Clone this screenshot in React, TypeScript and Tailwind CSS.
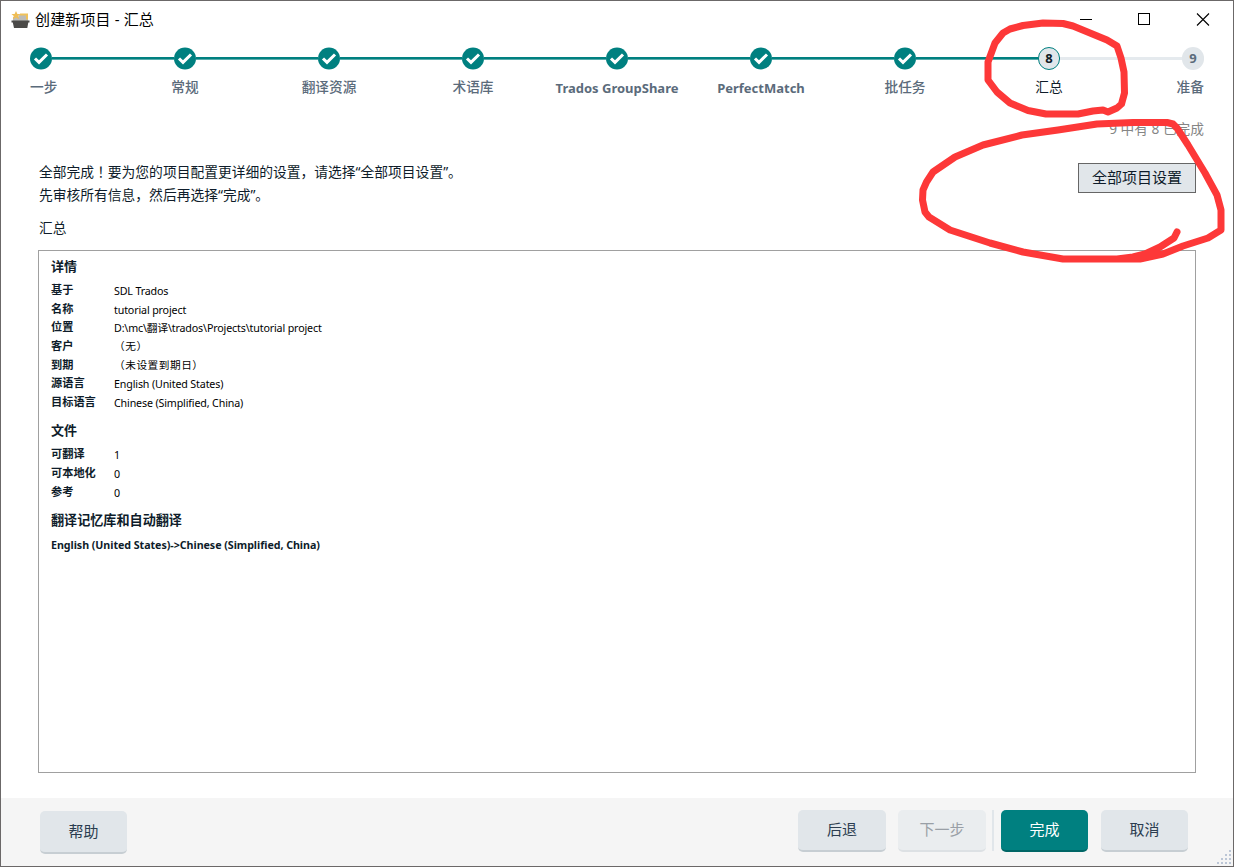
import { Fragment } from "react";

const steps = [
  "一步",
  "常规",
  "翻译资源",
  "术语库",
  "Trados GroupShare",
  "PerfectMatch",
  "批任务",
  "汇总",
  "准备",
];
const CURRENT = 7;

const details = [
  ["基于", "SDL Trados"],
  ["名称", "tutorial project"],
  ["位置", "D:\\mc\\翻译\\trados\\Projects\\tutorial project"],
  ["客户", "（无）"],
  ["到期", "（未设置到期日）"],
  ["源语言", "English (United States)"],
  ["目标语言", "Chinese (Simplified, China)"],
];

const files = [
  ["可翻译", "1"],
  ["可本地化", "0"],
  ["参考", "0"],
];

function AppIcon() {
  return (
    <svg width="20" height="20" viewBox="0 0 20 20" className="shrink-0">
      <path d="M2 11V7h5l2-3h8v7z" fill="#bdbcb8" />
      <path d="M9 3.500h8v6h-2v-4H9z" fill="#f0c25a" />
      <path d="M5 1l1.400 3H9.600L7.200 6l1 3.300L5 7.500 1.800 9.300l1-3.300L.4 4h3.200z" fill="#efbd55" />
      <path d="M.5 10.500h18v2h-1.200L16.300 18H3L1.800 12.500H.5z" fill="#4b4a48" />
    </svg>
  );
}

function TitleBar() {
  return (
    <header className="flex h-[38px] shrink-0 items-center pr-[23px] pb-px pl-[10px] text-[15px] text-black">
      <AppIcon />
      <h1 className="ml-[4px] pb-[2px] leading-5 tracking-[0.13px] whitespace-nowrap">创建新项目 - 汇总</h1>
      <div className="ml-auto flex items-center gap-[45px]">
        <svg width="14" height="14" viewBox="0 0 14 14" shapeRendering="crispEdges">
          <path d="M2 6.500h12" stroke="#000" />
        </svg>
        <svg width="14" height="14" viewBox="0 0 14 14" shapeRendering="crispEdges">
          <rect x="1.500" y="0.500" width="11" height="11" fill="none" stroke="#000" />
        </svg>
        <svg width="14" height="14" viewBox="0 0 14 14">
          <path d="M1 0.500l12 12M13 0.500L1 12.500" stroke="#000" strokeWidth="1.100" />
        </svg>
      </div>
    </header>
  );
}

function StepMark({ index }: { index: number }) {
  if (index < CURRENT) {
    return (
      <svg width="22" height="23" viewBox="0 0 22 23" className="shrink-0">
        <circle cx="11" cy="11.500" r="11" fill="#008080" />
        <path d="M5 11.500l4 3.900L17 7.500" fill="none" stroke="#fff" strokeWidth="3" />
      </svg>
    );
  }
  return (
    <span
      className={
        index === CURRENT
          ? "flex h-[23px] w-[22px] shrink-0 items-center justify-center rounded-full border border-[#008080] bg-[#e1e6ea] pt-px text-[13px] font-bold text-[#111c27]"
          : "flex h-[23px] w-[22px] shrink-0 items-center justify-center rounded-full bg-[#e1e6ea] pt-px text-[13px] font-bold text-[#5b6b7b]"
      }
    >
      {index + 1}
    </span>
  );
}

function Stepper() {
  return (
    <nav className="flex h-[59px] shrink-0 items-start pt-[8px] pr-[29px] pl-[29px]">
      {steps.map((label, i) => (
        <Fragment key={label}>
          {i > 0 && (
            <span
              className={
                i <= CURRENT
                  ? "mt-[10px] h-[3px] flex-1 border-b border-[#59acac] bg-[#008080]"
                  : "mt-[10px] h-[3px] flex-1 bg-[#e5eaee]"
              }
            />
          )}
          <div
            className={
              i === 0
                ? "flex w-[22px] flex-col items-start"
                : i === steps.length - 1
                  ? "flex w-[22px] flex-col items-end"
                  : "flex w-[22px] flex-col items-center"
            }
          >
            <StepMark index={i} />
            <span
              className={
                i === CURRENT
                  ? "mt-[7px] text-[13.7px] leading-5 whitespace-nowrap text-[#0e1c2a]"
                  : i === 4 || i === 5
                    ? "mt-[8px] text-[13px] leading-5 font-bold whitespace-nowrap text-[#5b6b7b]"
                    : "mt-[7px] text-[13.7px] leading-5 font-medium whitespace-nowrap text-[#5b6b7b]"
              }
            >
              {label}
            </span>
          </div>
        </Fragment>
      ))}
    </nav>
  );
}

function Rows({ rows }: { rows: string[][] }) {
  return (
    <dl className="grid grid-cols-[63px_1fr]">
      {rows.map(([name, value]) => (
        <Fragment key={name}>
          <dt className="h-[18.7px] text-[11.2px] leading-[18px] font-bold text-[#0e1c2a]">{name}</dt>
          <dd
            className={
              value.startsWith("（")
                ? "h-[18.7px] text-[10.7px] leading-[18px] tracking-[0.5px] text-black"
                : "h-[18.7px] pt-px text-[10.7px] leading-[18px] tracking-[-0.15px] text-black"
            }
          >
            {value}
          </dd>
        </Fragment>
      ))}
    </dl>
  );
}

function Summary() {
  return (
    <section className="mx-[37px] mt-[12px] h-[523px] shrink-0 border border-[#a0a0a0] pl-[12px]">
      <h2 className="mt-[5px] text-[13px] leading-5 font-bold text-[#0e1c2a]">详情</h2>
      <div className="mt-[5px]">
        <Rows rows={details} />
      </div>
      <h2 className="mt-[8.500px] text-[13px] leading-5 font-bold text-[#0e1c2a]">文件</h2>
      <div className="mt-[5px]">
        <Rows rows={files} />
      </div>
      <h2 className="mt-[9px] text-[13.1px] leading-5 font-bold text-[#0e1c2a]">翻译记忆库和自动翻译</h2>
      <p className="mt-[5px] text-[10.7px] leading-5 font-bold tracking-[-0.05px] text-[#0e1c2a]">
        English (United States)-&gt;Chinese (Simplified, China)
      </p>
    </section>
  );
}

function Footer() {
  const base = "rounded-[5px] border-b-2 text-[15px] leading-5 pb-[2px]";
  return (
    <footer className="mt-auto flex h-[68px] shrink-0 items-start bg-[#f5f5f5] pt-[12px] pr-[45px] pl-[39px]">
      <button className={`${base} mt-px h-[43px] w-[87px] border-[#c7ced3] bg-[#e1e6ea] text-[#2b3d50]`}>帮助</button>
      <button className={`${base} ml-auto h-[42px] w-[88px] border-[#c7ced3] bg-[#e1e6ea] text-[#2b3d50]`}>后退</button>
      <button className={`${base} ml-[12px] h-[42px] w-[88px] border-[#dde1e4] bg-[#eaedef] text-[#999fa6]`}>下一步</button>
      <span className="ml-[6px] h-[41px] w-[2px] bg-[#e1e6ea]" />
      <button className={`${base} ml-[7px] h-[42px] w-[87px] border-[#006666] bg-[#008080] text-white`}>完成</button>
      <button className={`${base} ml-[13px] h-[42px] w-[87px] border-[#c7ced3] bg-[#e1e6ea] text-[#2b3d50]`}>取消</button>
    </footer>
  );
}

function ResizeGrip() {
  const dots = [
    [12, 0],
    [8, 4],
    [12, 4],
    [4, 8],
    [8, 8],
    [12, 8],
    [0, 12],
    [4, 12],
    [8, 12],
    [12, 12],
  ];
  return (
    <svg width="15" height="15" viewBox="0 0 15 15" className="absolute right-[1px] bottom-[1px]">
      {dots.map(([x, y]) => (
        <rect key={`${x}-${y}`} x={x} y={y} width="2" height="2" fill="#bcc6d6" />
      ))}
    </svg>
  );
}

function MarkerStrokes() {
  return (
    <svg
      width="1234"
      height="867"
      viewBox="0 0 1234 867"
      className="pointer-events-none absolute -top-px -left-px"
      fill="none"
      stroke="#fd3838"
      strokeWidth="7"
      strokeLinecap="round"
      strokeLinejoin="round"
    >
      <path d="M1010 29L1023 25.500L1043 23L1063 23.500L1073 26L1090 33L1107 40L1117 46L1121 58L1124 72L1124.500 93L1121.500 104L1117 108L1108 112L1103 110L1093 111L1078 114L1046 114L1028 110.500L1010 103L997 92L988 80L988 62L995 43L1003 33Z" />
      <path d="M1177 232L1174 238L1160 247L1145 254L1133 257L1117 259H1063L1023 252L990 243L950 230L929 217L925 212L922.500 200L923 190L926.500 182L933 172L955 157L983 145L1022 135L1058 130L1097 124L1133 122.500H1167L1173 124L1177 128L1188 145L1205 173L1217 195L1221 210V230L1208 238L1183 246L1163 254L1140 259H1117" />
    </svg>
  );
}

export default function App() {
  return (
    <div className="relative flex h-[867px] w-[1234px] flex-col overflow-hidden border border-[#6b6868] bg-white font-['Noto_Sans','Noto_Sans_CJK_SC',sans-serif]">
      <TitleBar />
      <Stepper />
      <p className="mt-[21px] mr-[29px] h-5 shrink-0 text-right text-[13.7px] leading-5 text-[#858585]">
        9 中有 8 已完成
      </p>
      <div className="mt-[20px] mr-[37px] ml-[38px] flex h-[49px] shrink-0 items-start justify-between">
        <div className="text-[13.77px] leading-[24px] text-[#0e1c2a]">
          <p className="h-6">
            全部完成<span className="font-['Noto_Sans_CJK_TC',sans-serif]">！</span>
            要为您的项目配置更详细的设置，请选择“全部项目设置”。
          </p>
          <p className="h-6">先审核所有信息，然后再选择“完成”。</p>
        </div>
        <button className="mt-[4px] h-[30px] w-[118px] border border-[#666] bg-[#e1e6ea] pb-[2px] text-[15px] leading-5 text-[#0e1c2a]">
          全部项目设置
        </button>
      </div>
      <p className="mt-[10px] ml-[38px] h-5 shrink-0 text-[13.7px] leading-5 text-[#0e1c2a]">汇总</p>
      <Summary />
      <Footer />
      <ResizeGrip />
      <MarkerStrokes />
    </div>
  );
}
